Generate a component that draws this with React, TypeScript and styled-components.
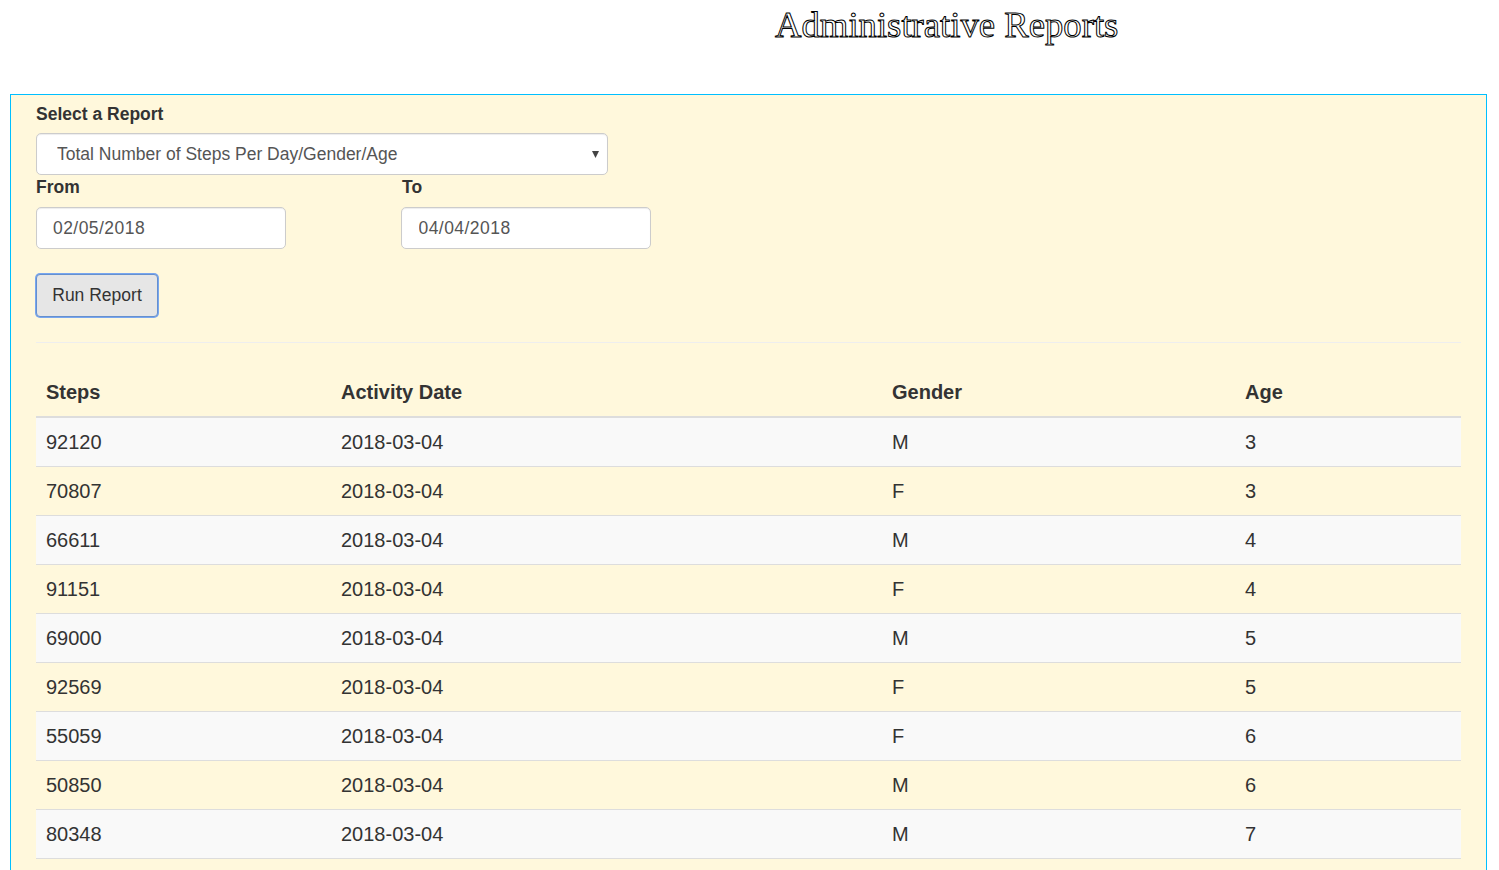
import React from "react";
import styled, { createGlobalStyle } from "styled-components";

const GlobalStyle = createGlobalStyle`
  * { box-sizing: border-box; }
  html, body, #root { height: 100%; }
  body {
    margin: 0;
    background: #fff;
    color: #333;
    font-family: "Liberation Sans", Arial, Helvetica, sans-serif;
    font-size: 17.5px;
    line-height: 25px;
    overflow: hidden;
  }
`;

const Page = styled.div`
  display: flex;
  flex-direction: column;
  height: 870px;
  overflow: hidden;
`;

const Title = styled.h1`
  margin: 0 0 0 775px;
  height: 94px;
  flex: none;
  padding-top: 4px;
  font-family: "Liberation Serif", "Times New Roman", serif;
  font-size: 36.7px;
  font-weight: 400;
  line-height: 41px;
  white-space: nowrap;
  color: #fff;
  -webkit-text-stroke: 1px #000;
`;

const Panel = styled.main`
  flex: none;
  width: 1477px;
  height: 900px;
  margin-left: 10px;
  padding: 6px 25px 0;
  border: 1px solid #00bfff;
  background: #fff8dc;
`;

const Label = styled.label<{ $top?: number; $left?: number }>`
  display: block;
  height: 32px;
  padding-top: ${(p) => p.$top ?? 0}px;
  padding-left: ${(p) => p.$left ?? 0}px;
  font-weight: 700;
`;

const Field = styled.div<{ $width: number }>`
  position: relative;
  width: ${(p) => p.$width}px;
`;

const controlStyle = `
  display: block;
  width: 100%;
  height: 42px;
  border: 1px solid #ccc;
  border-radius: 5px;
  background: #fff;
  color: #555;
  font-family: inherit;
  font-size: 17.5px;
  box-shadow: inset 0 1px 1px rgba(0, 0, 0, 0.075);
  outline: none;
`;

const Select = styled.select`
  ${controlStyle}
  appearance: none;
  padding: 0 30px 0 20px;
`;

const Arrow = styled.svg`
  position: absolute;
  right: 9px;
  top: 18px;
  pointer-events: none;
`;

const Input = styled.input<{ $indent: number }>`
  ${controlStyle}
  padding: 0 16px 0 ${(p) => p.$indent}px;
  letter-spacing: 0.45px;
`;

const DateRow = styled.div`
  display: flex;
  gap: 115px;
`;

const RunButton = styled.button`
  display: block;
  width: 122px;
  height: 43px;
  margin-top: 25px;
  padding: 0;
  border: 1px solid #6590cf;
  border-radius: 4px;
  background: #e6e6e6;
  color: #333;
  font-family: inherit;
  font-size: 17.5px;
  box-shadow: 0 0 0 1px #78a6ef;
`;

const Divider = styled.hr`
  height: 1px;
  margin: 25px 0;
  border: 0;
  background: #eee;
`;

const Table = styled.table`
  width: 1425px;
  table-layout: fixed;
  border-collapse: separate;
  border-spacing: 0;
  font-size: 20px;
  line-height: 28px;
  text-align: left;
`;

const Column = styled.col<{ $width: number }>`
  width: ${(p) => p.$width}px;
`;

const HeadCell = styled.th`
  height: 50px;
  padding: 0 10px;
  border-bottom: 2px solid #ddd;
  font-weight: 700;
`;

const Row = styled.tr`
  &:nth-child(odd) { background: #f9f9f9; }
`;

const Cell = styled.td`
  height: 49px;
  padding: 0 10px;
  border-bottom: 1px solid #ddd;
`;

const columns = [
  { name: "Steps", width: 295 },
  { name: "Activity Date", width: 551 },
  { name: "Gender", width: 353 },
  { name: "Age", width: 226 },
];

const records = [
  ["92120", "2018-03-04", "M", "3"],
  ["70807", "2018-03-04", "F", "3"],
  ["66611", "2018-03-04", "M", "4"],
  ["91151", "2018-03-04", "F", "4"],
  ["69000", "2018-03-04", "M", "5"],
  ["92569", "2018-03-04", "F", "5"],
  ["55059", "2018-03-04", "F", "6"],
  ["50850", "2018-03-04", "M", "6"],
  ["80348", "2018-03-04", "M", "7"],
];

export default function App() {
  return (
    <Page>
      <GlobalStyle />
      <Title>Administrative Reports</Title>
      <Panel>
        <Label htmlFor="report" $top={1}>Select a Report</Label>
        <Field $width={572}>
          <Select id="report">
            <option>Total Number of Steps Per Day/Gender/Age</option>
          </Select>
          <Arrow width="7" height="7" viewBox="0 0 7 7">
            <path d="M0 0H7L3.5 7Z" fill="#444" />
          </Arrow>
        </Field>
        <DateRow>
          <Field $width={250}>
            <Label htmlFor="from">From</Label>
            <Input id="from" defaultValue="02/05/2018" $indent={16} />
          </Field>
          <Field $width={250}>
            <Label htmlFor="to" $left={1}>To</Label>
            <Input id="to" defaultValue="04/04/2018" $indent={16.5} />
          </Field>
        </DateRow>
        <RunButton type="button">Run Report</RunButton>
        <Divider />
        <Table>
          <colgroup>
            {columns.map((c) => (
              <Column key={c.name} $width={c.width} />
            ))}
          </colgroup>
          <thead>
            <tr>
              {columns.map((c) => (
                <HeadCell key={c.name}>{c.name}</HeadCell>
              ))}
            </tr>
          </thead>
          <tbody>
            {records.map((record) => (
              <Row key={record[0]}>
                {record.map((value, i) => (
                  <Cell key={columns[i].name}>{value}</Cell>
                ))}
              </Row>
            ))}
          </tbody>
        </Table>
      </Panel>
    </Page>
  );
}
